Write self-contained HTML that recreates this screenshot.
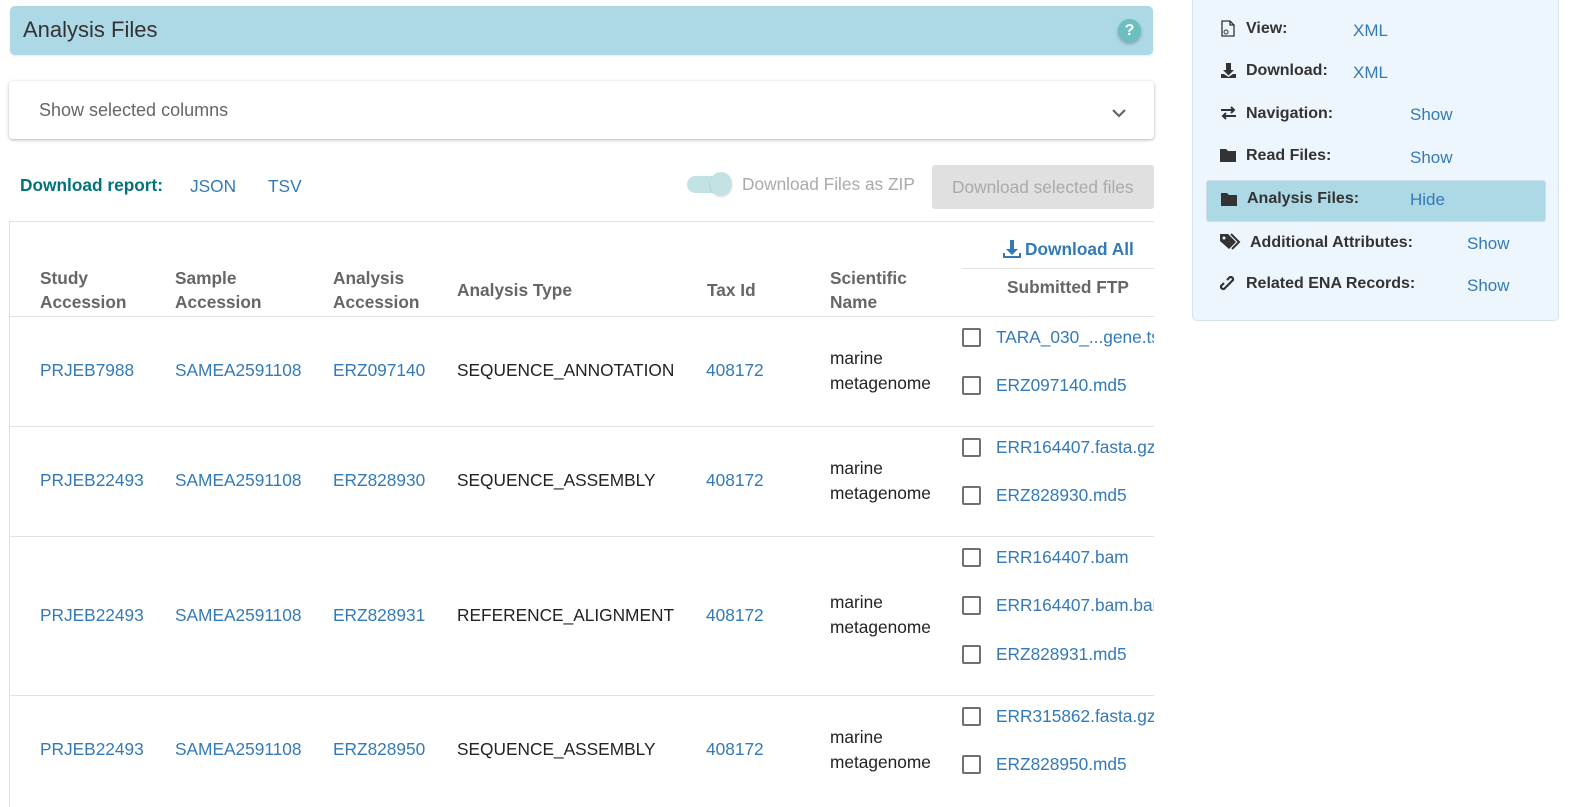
<!DOCTYPE html>
<html><head><meta charset="utf-8"><style>
*{margin:0;padding:0;box-sizing:border-box}
html,body{overflow:hidden}
body{width:1579px;height:807px;background:#fff;font-family:"Liberation Sans",Arial,sans-serif;font-size:17.3px;color:#222;position:relative}
.a{position:absolute;white-space:nowrap;line-height:20px}
.l{color:#337ab7}
.h{color:#666;font-weight:bold}
.hl{position:absolute;height:1px;background:#e2e2e2}
.cb{position:absolute;width:19px;height:19px;border:2.5px solid #707070;border-radius:2px}
.sb{font-weight:bold;color:#333;font-size:16px}
.sl{color:#337ab7;font-size:17px}
</style></head><body>
<div style="position:absolute;left:10px;top:6px;width:1143px;height:49px;background:#add8e6;border-radius:5px;box-shadow:0 1px 2px rgba(0,0,0,.1)"></div>
<div class="a" style="left:23px;top:18px;font-size:22px;line-height:24px;color:#333">Analysis Files</div>
<div style="position:absolute;left:1118px;top:19px;width:23px;height:23px;border-radius:50%;background:#6cbfbf;color:#fff;font-weight:bold;font-size:16px;text-align:center;line-height:23px;box-shadow:0 2px 3px rgba(0,0,0,.25)">?</div>
<div style="position:absolute;left:9px;top:81px;width:1145px;height:58px;background:#fff;border-radius:4px;box-shadow:0 1px 3px rgba(0,0,0,.3)"></div>
<div class="a" style="left:39px;top:100px;font-size:18px;color:#666">Show selected columns</div>
<svg style="position:absolute;left:1111px;top:107px" width="16" height="12"><path d="M2 3 L8 9 L14 3" stroke="#666" stroke-width="2.2" fill="none"/></svg>
<div class="a" style="left:20px;top:175px;font-weight:bold;color:#00747a">Download report:</div>
<div class="a l" style="left:190px;top:176px">JSON</div>
<div class="a l" style="left:268px;top:176px">TSV</div>
<div style="position:absolute;left:687px;top:176px;width:44px;height:17px;border-radius:9px;background:#c3e2e4"></div>
<div style="position:absolute;left:710px;top:172px;width:22px;height:24px;border-radius:50%;background:#c3e2e4;box-shadow:0 1px 2px rgba(0,0,0,.15)"></div>
<div class="a" style="left:742px;top:174px;color:#aaa">Download Files as ZIP</div>
<div style="position:absolute;left:932px;top:165px;width:222px;height:44px;background:#e0e0e0;border-radius:3px"></div>
<div class="a" style="left:952px;top:177px;color:#aaa">Download selected files</div>
<div class="hl" style="left:9px;top:221px;width:1145px"></div>
<div style="position:absolute;left:9px;top:221px;width:1px;height:586px;background:#e2e2e2"></div>
<svg style="position:absolute;left:1003px;top:239px" width="18" height="19"><path d="M7 1h4v9h4l-6 6-6-6h4z" fill="#337ab7"/><path d="M1 14v4h16v-4" stroke="#337ab7" stroke-width="2" fill="none"/></svg>
<div class="a" style="left:1025px;top:239px;font-weight:bold;color:#337ab7">Download All</div>
<div class="hl" style="left:962px;top:268px;width:192px"></div>
<div class="a h" style="left:40px;top:268px">Study</div><div class="a h" style="left:40px;top:292px">Accession</div>
<div class="a h" style="left:175px;top:268px">Sample</div><div class="a h" style="left:175px;top:292px">Accession</div>
<div class="a h" style="left:333px;top:268px">Analysis</div><div class="a h" style="left:333px;top:292px">Accession</div>
<div class="a h" style="left:457px;top:280px">Analysis Type</div>
<div class="a h" style="left:707px;top:280px">Tax Id</div>
<div class="a h" style="left:830px;top:268px">Scientific</div><div class="a h" style="left:830px;top:292px">Name</div>
<div class="a h" style="left:1007px;top:277px">Submitted FTP</div>
<div class="hl" style="left:9px;top:316px;width:1145px"></div>

<div style="position:absolute;left:0;top:0;width:1154px;height:807px;overflow:hidden">
<div class="a l" style="left:40px;top:360px">PRJEB7988</div>
<div class="a l" style="left:175px;top:360px">SAMEA2591108</div>
<div class="a l" style="left:333px;top:360px">ERZ097140</div>
<div class="a" style="left:457px;top:360px">SEQUENCE_ANNOTATION</div>
<div class="a l" style="left:706px;top:360px">408172</div>
<div class="a" style="left:830px;top:348px">marine</div><div class="a" style="left:830px;top:373px">metagenome</div>
<div class="cb" style="left:962px;top:328px"></div><div class="a l" style="left:996px;top:327px">TARA_030_...gene.tsv</div>
<div class="cb" style="left:962px;top:376px"></div><div class="a l" style="left:996px;top:375px">ERZ097140.md5</div>
<div class="hl" style="left:9px;top:426px;width:1145px"></div>
<div class="a l" style="left:40px;top:470px">PRJEB22493</div>
<div class="a l" style="left:175px;top:470px">SAMEA2591108</div>
<div class="a l" style="left:333px;top:470px">ERZ828930</div>
<div class="a" style="left:457px;top:470px">SEQUENCE_ASSEMBLY</div>
<div class="a l" style="left:706px;top:470px">408172</div>
<div class="a" style="left:830px;top:458px">marine</div><div class="a" style="left:830px;top:483px">metagenome</div>
<div class="cb" style="left:962px;top:438px"></div><div class="a l" style="left:996px;top:437px">ERR164407.fasta.gz</div>
<div class="cb" style="left:962px;top:486px"></div><div class="a l" style="left:996px;top:485px">ERZ828930.md5</div>
<div class="hl" style="left:9px;top:536px;width:1145px"></div>
<div class="a l" style="left:40px;top:605px">PRJEB22493</div>
<div class="a l" style="left:175px;top:605px">SAMEA2591108</div>
<div class="a l" style="left:333px;top:605px">ERZ828931</div>
<div class="a" style="left:457px;top:605px">REFERENCE_ALIGNMENT</div>
<div class="a l" style="left:706px;top:605px">408172</div>
<div class="a" style="left:830px;top:592px">marine</div><div class="a" style="left:830px;top:617px">metagenome</div>
<div class="cb" style="left:962px;top:548px"></div><div class="a l" style="left:996px;top:547px">ERR164407.bam</div>
<div class="cb" style="left:962px;top:596px"></div><div class="a l" style="left:996px;top:595px">ERR164407.bam.bai</div>
<div class="cb" style="left:962px;top:645px"></div><div class="a l" style="left:996px;top:644px">ERZ828931.md5</div>
<div class="hl" style="left:9px;top:695px;width:1145px"></div>
<div class="a l" style="left:40px;top:739px">PRJEB22493</div>
<div class="a l" style="left:175px;top:739px">SAMEA2591108</div>
<div class="a l" style="left:333px;top:739px">ERZ828950</div>
<div class="a" style="left:457px;top:739px">SEQUENCE_ASSEMBLY</div>
<div class="a l" style="left:706px;top:739px">408172</div>
<div class="a" style="left:830px;top:727px">marine</div><div class="a" style="left:830px;top:752px">metagenome</div>
<div class="cb" style="left:962px;top:707px"></div><div class="a l" style="left:996px;top:706px">ERR315862.fasta.gz</div>
<div class="cb" style="left:962px;top:755px"></div><div class="a l" style="left:996px;top:754px">ERZ828950.md5</div>
</div>

<div style="position:absolute;left:1192px;top:-4px;width:367px;height:325px;background:#eef6fd;border:1px solid #d8e2ea;border-radius:5px"></div>
<div style="position:absolute;left:1206px;top:180px;width:340px;height:42px;background:#add8e6;border-radius:3px;border:1px solid #cde"></div>
<svg style="position:absolute;left:1220px;top:20px" width="16" height="17"><path d="M2 1h8l4 4v11H2z M10 1v4h4" stroke="#333" stroke-width="1.3" fill="none"/><circle cx="6" cy="12" r="2" stroke="#333" fill="none"/></svg>
<div class="a sb" style="left:1246px;top:19px">View:</div><div class="a sl" style="left:1353px;top:21px">XML</div>
<svg style="position:absolute;left:1220px;top:62px" width="17" height="17"><path d="M6 1h5v7h3l-5.5 5.5L3 8h3z" fill="#333"/><path d="M1 12v4h15v-4h-3l-4.5 3L4 12z" fill="#333"/></svg>
<div class="a sb" style="left:1246px;top:61px">Download:</div><div class="a sl" style="left:1353px;top:63px">XML</div>
<svg style="position:absolute;left:1220px;top:105px" width="17" height="16"><path d="M1 5h13M11 2l3 3-3 3M16 11H3M6 8l-3 3 3 3" stroke="#333" stroke-width="2" fill="none"/></svg>
<div class="a sb" style="left:1246px;top:104px">Navigation:</div><div class="a sl" style="left:1410px;top:105px">Show</div>
<svg style="position:absolute;left:1220px;top:148px" width="17" height="14"><path d="M0 1h6l2 2h8v11H0z" fill="#333"/></svg>
<div class="a sb" style="left:1246px;top:146px">Read Files:</div><div class="a sl" style="left:1410px;top:148px">Show</div>
<svg style="position:absolute;left:1221px;top:192px" width="17" height="14"><path d="M0 1h6l2 2h8v11H0z" fill="#333"/></svg>
<div class="a sb" style="left:1247px;top:189px">Analysis Files:</div><div class="a sl" style="left:1410px;top:190px">Hide</div>
<svg style="position:absolute;left:1220px;top:233px" width="22" height="18"><path d="M0 1h8l8 8-7 7-9-8z" fill="#333"/><circle cx="4" cy="5" r="1.5" fill="#eef6fd"/><path d="M11 1l8 8-7 7" stroke="#333" stroke-width="2" fill="none"/></svg>
<div class="a sb" style="left:1250px;top:233px">Additional Attributes:</div><div class="a sl" style="left:1467px;top:234px">Show</div>
<svg style="position:absolute;left:1220px;top:276px" width="17" height="17"><path d="M7 10l-3 3a2.5 2.5 0 0 1-3-3l3-3M10 7l3-3a2.5 2.5 0 0 0-3-3l-3 3M6 11l5-5" stroke="#333" stroke-width="2.2" fill="none"/></svg>
<div class="a sb" style="left:1246px;top:274px">Related ENA Records:</div><div class="a sl" style="left:1467px;top:276px">Show</div>
</body></html>
